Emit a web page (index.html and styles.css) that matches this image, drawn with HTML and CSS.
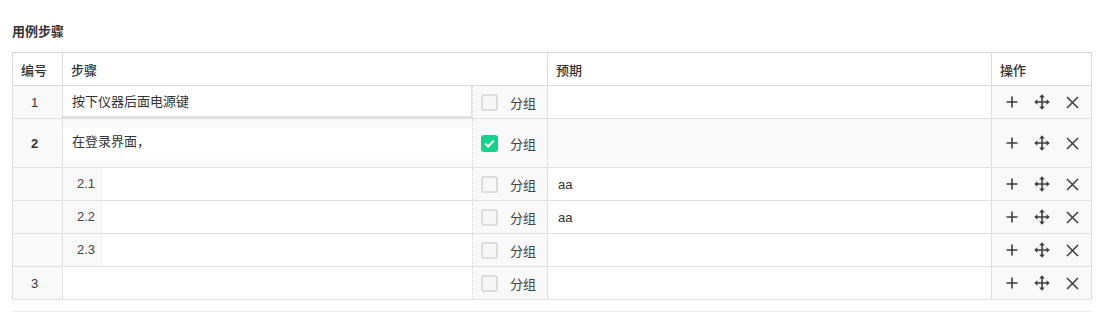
FILE: index.html
```html
<!DOCTYPE html>
<html lang="zh-CN">
  <head>
    <meta charset="UTF-8" />
    <meta name="viewport" content="width=device-width, initial-scale=1.0" />
    <title>用例步骤</title>
    <link rel="stylesheet" href="styles.css">
  </head>
  <body>
    <svg class="sprite" xmlns="http://www.w3.org/2000/svg">
      <defs>
        <symbol id="icon-plus" viewBox="0 0 12 12">
          <path d="M6 0.5v11M0.5 6h11" stroke="currentColor" stroke-width="1.6" fill="none" />
        </symbol>
        <symbol id="icon-move" viewBox="0 0 16 16">
          <path d="M8 2.5v11M2.5 8h11" stroke="currentColor" stroke-width="1.6" fill="none" />
          <path d="M8 0.3L5.2 3.4h5.6zM8 15.7l-2.8-3.1h5.6zM0.3 8l3.1-2.8v5.6zM15.7 8l-3.1-2.8v5.6z" fill="currentColor" />
        </symbol>
        <symbol id="icon-close" viewBox="0 0 13 13">
          <path d="M1 1l11 11M12 1L1 12" stroke="currentColor" stroke-width="1.5" fill="none" />
        </symbol>
      </defs>
    </svg>

    <div class="case-steps">
      <div class="section-title">用例步骤</div>
      <table class="step-table">
        <colgroup>
          <col class="w-no" />
          <col class="w-step" />
          <col class="w-group" />
          <col class="w-expect" />
          <col class="w-ops" />
        </colgroup>
        <thead>
          <tr>
            <th>编号</th>
            <th colspan="2">步骤</th>
            <th>预期</th>
            <th>操作</th>
          </tr>
        </thead>
        <tbody>
          <tr>
            <td class="no">1</td>
            <td class="step"><div class="step-input bordered">按下仪器后面电源键</div></td>
            <td class="group"><label class="check"><span class="box"></span>分组</label></td>
            <td class="expect"></td>
            <td class="ops">
              <div class="op-icons">
                <svg class="i-plus"><use href="#icon-plus" /></svg>
                <svg class="i-move"><use href="#icon-move" /></svg>
                <svg class="i-close"><use href="#icon-close" /></svg>
              </div>
            </td>
          </tr>
          <tr class="group-row">
            <td class="no"><strong>2</strong></td>
            <td class="step"><div class="step-input">在登录界面，</div></td>
            <td class="group"><label class="check"><span class="box checked"></span>分组</label></td>
            <td class="expect gray"></td>
            <td class="ops">
              <div class="op-icons">
                <svg class="i-plus"><use href="#icon-plus" /></svg>
                <svg class="i-move"><use href="#icon-move" /></svg>
                <svg class="i-close"><use href="#icon-close" /></svg>
              </div>
            </td>
          </tr>
          <tr class="sub-row">
            <td class="no"></td>
            <td class="step"><div class="sub-step"><span class="sub-no">2.1</span><div class="step-input"></div></div></td>
            <td class="group"><label class="check"><span class="box"></span>分组</label></td>
            <td class="expect">aa</td>
            <td class="ops">
              <div class="op-icons">
                <svg class="i-plus"><use href="#icon-plus" /></svg>
                <svg class="i-move"><use href="#icon-move" /></svg>
                <svg class="i-close"><use href="#icon-close" /></svg>
              </div>
            </td>
          </tr>
          <tr class="sub-row">
            <td class="no"></td>
            <td class="step"><div class="sub-step"><span class="sub-no">2.2</span><div class="step-input"></div></div></td>
            <td class="group"><label class="check"><span class="box"></span>分组</label></td>
            <td class="expect">aa</td>
            <td class="ops">
              <div class="op-icons">
                <svg class="i-plus"><use href="#icon-plus" /></svg>
                <svg class="i-move"><use href="#icon-move" /></svg>
                <svg class="i-close"><use href="#icon-close" /></svg>
              </div>
            </td>
          </tr>
          <tr class="sub-row">
            <td class="no"></td>
            <td class="step"><div class="sub-step"><span class="sub-no">2.3</span><div class="step-input"></div></div></td>
            <td class="group"><label class="check"><span class="box"></span>分组</label></td>
            <td class="expect"></td>
            <td class="ops">
              <div class="op-icons">
                <svg class="i-plus"><use href="#icon-plus" /></svg>
                <svg class="i-move"><use href="#icon-move" /></svg>
                <svg class="i-close"><use href="#icon-close" /></svg>
              </div>
            </td>
          </tr>
          <tr>
            <td class="no">3</td>
            <td class="step"><div class="step-input"></div></td>
            <td class="group"><label class="check"><span class="box"></span>分组</label></td>
            <td class="expect"></td>
            <td class="ops">
              <div class="op-icons">
                <svg class="i-plus"><use href="#icon-plus" /></svg>
                <svg class="i-move"><use href="#icon-move" /></svg>
                <svg class="i-close"><use href="#icon-close" /></svg>
              </div>
            </td>
          </tr>
        </tbody>
      </table>
      <div class="section-line"></div>
    </div>
  </body>
</html>
```

FILE: styles.css
```css
body {
  margin: 0;
  padding: 0;
  background-color: #fff;
  color: #333;
  font-family: "Liberation Sans", "Noto Sans CJK SC", sans-serif;
  font-size: 13px;
}

.sprite {
  position: absolute;
  width: 0;
  height: 0;
  overflow: hidden;
}

.case-steps {
  padding: 20px 26px 0 12px;
}

.section-title {
  font-weight: bold;
  line-height: 24px;
  margin-bottom: 8px;
}

.step-table {
  width: 1080px;
  table-layout: fixed;
  border-collapse: collapse;
}

.w-no { width: 50px; }
.w-step { width: 410px; }
.w-group { width: 75px; }
.w-expect { width: 444px; }
.w-ops { width: 100px; }

.step-table th {
  height: 32px;
  padding: 0 8px;
  text-align: left;
  font-weight: 500;
  color: #333;
  background-color: #fff;
  border: 1px solid #d6d9df;
}

.step-table td {
  height: 32px;
  padding: 0;
  background-color: #f9f9f9;
  border: 1px solid #e0e0e0;
}

.step-table .no {
  text-align: center;
  padding-right: 6px;
}

.step-table .step {
  border-right: 1px dotted #d8d8d8;
}

.step-input {
  height: 32px;
  line-height: 32px;
  padding-left: 9px;
  background-color: #fff;
  box-sizing: border-box;
}

.step-input.bordered {
  border-right: 1px solid #e2e2e2;
  border-bottom: 2px solid #e2e2e2;
  line-height: 31px;
}

.group-row td {
  height: 48px;
}

.group-row .step {
  padding: 0;
}

.group-row .step-input {
  margin: 1px 0 0;
  height: 31px;
  line-height: 28px;
}

.sub-row .step {
  border-left: 1px dotted #d8d8d8;
}

.sub-step {
  display: flex;
  height: 32px;
}

.sub-no {
  width: 40px;
  padding-left: 14px;
  box-sizing: border-box;
  line-height: 32px;
  color: #444;
}

.sub-step .step-input {
  flex: 1;
}

.step-table .group {
  border-left: 1px dotted #d8d8d8;
}

.check {
  display: flex;
  align-items: center;
  padding-left: 8px;
  color: #444;
}

.box {
  width: 17px;
  height: 17px;
  margin-right: 12px;
  border: 2px solid #dcdcdc;
  border-radius: 3px;
  box-sizing: border-box;
  background-color: #f7f7f7;
}

.box.checked {
  border-color: #14d28b;
  background-color: #14d28b;
  background-image: url("data:image/svg+xml,%3Csvg xmlns='http://www.w3.org/2000/svg' viewBox='0 0 13 13'%3E%3Cpath d='M2.2 6.6l2.9 2.9 5.6-5.8' stroke='%23fff' stroke-width='2' fill='none'/%3E%3C/svg%3E");
  background-size: 13px 13px;
  background-position: center;
  background-repeat: no-repeat;
}

.step-table .expect {
  padding-left: 10px;
  background-color: #fff;
}

.step-table .expect.gray {
  background-color: #f9f9f9;
}

.op-icons {
  display: flex;
  align-items: center;
  gap: 16px;
  padding-left: 14px;
  color: #3d3d3d;
}

.i-plus { width: 12px; height: 12px; }
.i-move { width: 16px; height: 16px; }
.i-close { width: 13px; height: 13px; }

.section-line {
  width: 1080px;
  margin-top: 11px;
  border-top: 1px solid #ececec;
}
```
